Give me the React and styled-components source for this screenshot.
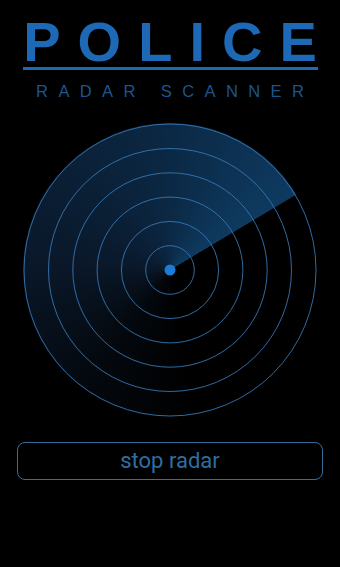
import React from 'react';
import styled, { createGlobalStyle } from 'styled-components';

const GlobalStyle = createGlobalStyle`
  html, body {
    margin: 0;
    padding: 0;
    background: #000;
  }
`;

const Page = styled.div`
  width: 340px;
  height: 567px;
  background: #000;
  display: flex;
  flex-direction: column;
  align-items: center;
  overflow: hidden;
`;

const Header = styled.header`
  width: 295px;
  display: flex;
  flex-direction: column;
  align-items: center;
  margin-top: 17px;
`;

// trailing letter-spacing is pulled back with a negative margin so the word stays centred
const Title = styled.h1`
  margin: 0 -${p => p.spacing}px 0 0;
  font-family: "Liberation Sans", Arial, sans-serif;
  font-weight: 700;
  font-size: 56px;
  line-height: 50px;
  letter-spacing: ${p => p.spacing}px;
  white-space: nowrap;
  color: #1d69b6;
`;

const Rule = styled.div`
  width: 100%;
  height: 3px;
  background: #1d69b6;
`;

const Subtitle = styled.h2`
  margin: 11px -${p => p.spacing}px 0 0;
  font-family: "Liberation Sans", Arial, sans-serif;
  font-weight: 400;
  font-size: 16.5px;
  line-height: 20px;
  letter-spacing: ${p => p.spacing}px;
  white-space: nowrap;
  color: #1b5590;
`;

const Scope = styled.div`
  margin-top: 22px;
  width: ${p => p.size}px;
  height: ${p => p.size}px;
  border-radius: 50%;
  background: conic-gradient(
    from 59.4deg,
    #000 0deg,
    #000 110deg,
    #04090f 160deg,
    #0a182a 215deg,
    #0b2742 295deg,
    #0e3a60 359.5deg,
    #000 360deg
  );
  svg {
    display: block;
  }
`;

const StopButton = styled.button`
  margin-top: 25px;
  width: 306px;
  height: 38px;
  box-sizing: border-box;
  background: transparent;
  border: 1px solid #3a6d98;
  border-radius: 8px;
  font-family: Roboto, "Liberation Sans", sans-serif;
  font-size: 22px;
  color: #2d6ea3;
  padding: 0 0 2px;
  cursor: pointer;
`;

const SIZE = 294;
const RINGS = [24.3, 48.6, 72.9, 97.2, 121.5, 146];

const Radar = () => {
  const c = SIZE / 2;
  return (
    <Scope size={SIZE}>
      <svg width={SIZE} height={SIZE} viewBox={`0 0 ${SIZE} ${SIZE}`}>
        {RINGS.map(r => (
          <circle key={r} cx={c} cy={c} r={r} fill="none" stroke="#3576b3" strokeWidth="0.9" />
        ))}
        <circle cx={c} cy={c} r="5.5" fill="#1c7bd4" />
      </svg>
    </Scope>
  );
};

export default function App() {
  return (
    <>
      <GlobalStyle />
      <Page>
        <Header>
          <Title spacing={17}>POLICE</Title>
          <Rule />
          <Subtitle spacing={10.4}>RADAR SCANNER</Subtitle>
        </Header>
        <Radar />
        <StopButton>stop radar</StopButton>
      </Page>
    </>
  );
}
